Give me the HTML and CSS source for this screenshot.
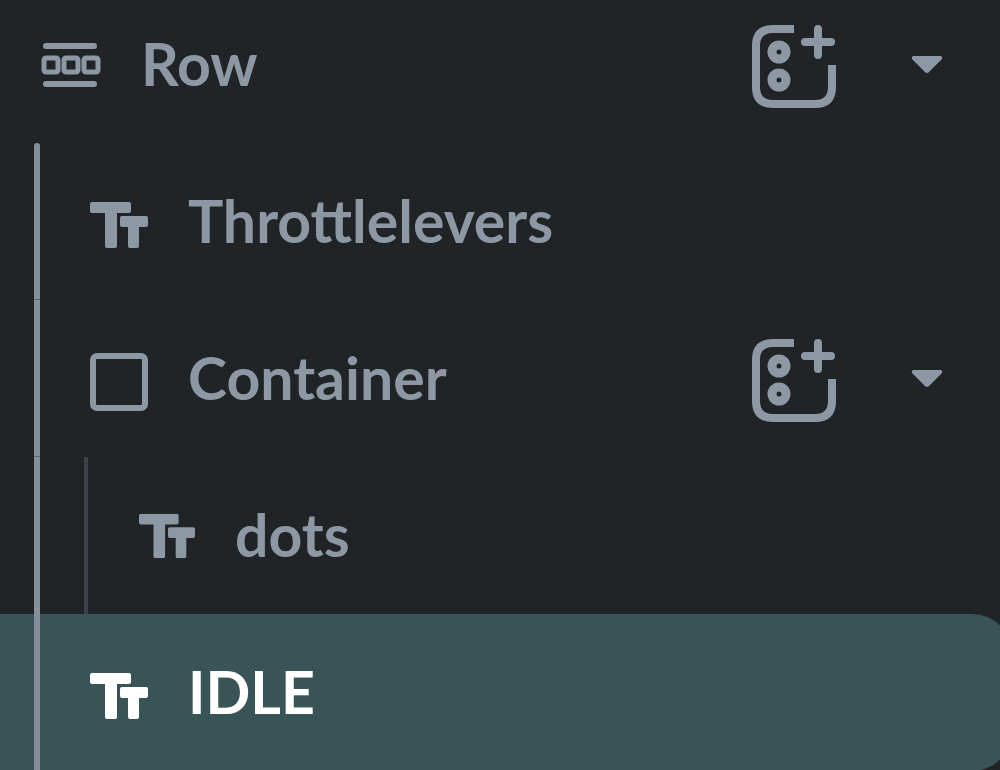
FILE: index.html
```html
<!DOCTYPE html>
<html lang="en">
<head>
<meta charset="utf-8">
<title>Widget tree</title>
<link rel="stylesheet" href="styles.css">
</head>
<body>
<svg class="symbols" aria-hidden="true">
  <symbol id="text" viewBox="0 0 58 46">
    <path d="M2 0H39Q41 0 41 2V9Q41 11 39 11H27V44Q27 46 25 46H17Q15 46 15 44V11H2Q0 11 0 9V2Q0 0 2 0Z"/>
    <path d="M32 14H56Q58 14 58 16V23Q58 25 56 25H49V44Q49 46 47 46H40Q38 46 38 44V25H32Q30 25 30 23V16Q30 14 32 14Z"/>
  </symbol>
  <symbol id="add" viewBox="0 0 86 86">
    <g fill="none" stroke="currentColor">
      <path stroke-width="8" d="M43 5H22Q5 5 5 22V63Q5 80 22 80H64Q81 80 81 63V41"/>
      <path stroke-width="8" stroke-linecap="round" d="M54 18H80M67 5V31"/>
      <circle cx="28" cy="28" r="7" stroke-width="9"/>
      <circle cx="28" cy="56" r="7" stroke-width="9"/>
    </g>
  </symbol>
  <symbol id="caret" viewBox="0 0 32 18">
    <path d="M2 0H30Q32 1 31 3L18 16Q16 18 14 16L1 3Q0 1 2 0Z"/>
  </symbol>
</svg>
<ul class="tree">
  <li class="row root">
    <svg class="icon row-icon" viewBox="0 0 60 44" aria-hidden="true">
      <path d="M5 3H53M5 41H53" fill="none" stroke="currentColor" stroke-width="6" stroke-linecap="round"/>
      <g fill="none" stroke="currentColor" stroke-width="5">
        <rect x="3" y="15" width="14" height="14" rx="2"/>
        <rect x="23" y="15" width="14" height="14" rx="2"/>
        <rect x="43" y="15" width="14" height="14" rx="2"/>
      </g>
    </svg>
    <span class="label">Row</span>
    <button class="add" aria-label="Add child to Row"><svg viewBox="0 0 86 86"><use href="#add"/></svg></button>
    <button class="caret" aria-label="Collapse Row"><svg viewBox="0 0 32 18"><use href="#caret"/></svg></button>
  </li>
  <li class="row">
    <span class="guide first"></span>
    <svg class="icon text-icon" viewBox="0 0 58 46" aria-hidden="true"><use href="#text"/></svg>
    <span class="label">Throttlelevers</span>
  </li>
  <li class="row">
    <span class="guide"></span>
    <svg class="icon box-icon" viewBox="0 0 58 58" aria-hidden="true"><rect x="3" y="3" width="52" height="52" rx="4" fill="none" stroke="currentColor" stroke-width="6"/></svg>
    <span class="label">Container</span>
    <button class="add" aria-label="Add child to Container"><svg viewBox="0 0 86 86"><use href="#add"/></svg></button>
    <button class="caret" aria-label="Collapse Container"><svg viewBox="0 0 32 18"><use href="#caret"/></svg></button>
  </li>
  <li class="row nested">
    <span class="guide"></span>
    <span class="guide inner"></span>
    <svg class="icon text-icon" viewBox="0 0 58 46" aria-hidden="true"><use href="#text"/></svg>
    <span class="label">dots</span>
  </li>
  <li class="row selected" aria-current="true">
    <span class="guide last"></span>
    <svg class="icon text-icon" viewBox="0 0 58 46" aria-hidden="true"><use href="#text"/></svg>
    <span class="label">IDLE</span>
  </li>
</ul>
</body>
</html>
```
FILE: styles.css
```css
* { box-sizing: border-box; }

body {
  margin: 0;
  min-height: 100vh;
  overflow: hidden;
  background: #202427;
  color: #8e98a4;
  font-family: Lato, "Noto Sans", sans-serif;
}

.symbols { display: none; }

svg { display: block; fill: currentColor; }

.tree { margin: 0; padding: 0; list-style: none; }

.row {
  display: flex;
  align-items: center;
  height: 157px;
  padding: 0 57px 0 34px;
}

.root {
  height: 143px;
  padding-left: 41px;
  padding-bottom: 13px;
}

.guide {
  flex: none;
  align-self: stretch;
  width: 6px;
  margin-right: 50px;
  background: #858f9a;
  border-bottom: 1px solid #5c656e;
}

.first { border-radius: 3px 3px 0 0; }

.last { border-bottom: 0; }

.nested .guide { margin-right: 44px; border-bottom: 0; }

.nested .inner {
  width: 4px;
  margin-right: 51px;
  background: #3b404c;
}

.icon { flex: none; margin-right: 40px; }

.row-icon { width: 60px; height: 44px; }

.text-icon { width: 58px; height: 46px; margin-top: 6px; }

.box-icon { width: 58px; height: 58px; margin-top: 6px; }

.nested .text-icon { width: 56px; margin-top: 0; }

.label {
  flex: 1;
  padding-bottom: 2px;
  font-size: 59px;
  font-weight: 700;
  line-height: 72px;
}

button {
  flex: none;
  padding: 0;
  border: 0;
  background: none;
  color: inherit;
}

.add { width: 86px; margin: 4px 74px 0 0; }

.caret { width: 32px; }

.selected {
  margin-right: -12px;
  background: #385457;
  border-radius: 0 40px 40px 0;
  color: #fff;
}
```
